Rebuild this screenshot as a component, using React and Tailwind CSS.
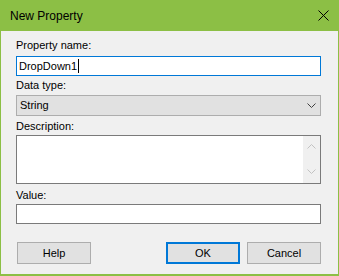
import React from 'react';

const font = { fontFamily: '"Liberation Sans", Arial, sans-serif' };

const Label = ({ children, className = '' }) => (
  <div className={`h-[13px] text-[11px] leading-[13px] text-black ${className}`}>{children}</div>
);

const Button = ({ children, primary }) => (
  <button
    className={`w-[74px] h-[22px] flex items-center justify-center text-[11px] text-black bg-[#e1e1e1] ${
      primary ? 'border-2 border-[#0078d7]' : 'border border-[#adadad]'
    }`}
  >
    {children}
  </button>
);

const Chevron = ({ up, color }) => (
  <svg width="9" height="5" viewBox="0 0 9 5" className="block">
    <path
      d={up ? 'M0.5 4.5 L4.5 0.5 L8.5 4.5' : 'M0.5 0.5 L4.5 4.5 L8.5 0.5'}
      fill="none"
      stroke={color}
      strokeWidth="1"
    />
  </svg>
);

export default function App() {
  return (
    <div className="w-[339px] h-[276px] flex flex-col bg-[#8cbf45]" style={font}>
      {/* Title bar */}
      <div className="h-[31px] flex items-center justify-between pl-[10px] pr-[10px]">
        <span className="text-[12px] text-black">New Property</span>
        <svg width="11" height="11" viewBox="0 0 11 11" className="block">
          <path d="M0.5 0.5 L10.5 10.5 M10.5 0.5 L0.5 10.5" stroke="#000" strokeWidth="1" />
        </svg>
      </div>

      {/* Body */}
      <div className="flex-1 mx-[1px] mb-[2px] bg-[#f0f0f0] pt-[8px] pl-[15px] pr-[17px]">
        <Label>Property name:</Label>
        <div className="mt-[4px] h-[20px] bg-white border border-[#0078d7] flex items-center pl-[2px] text-[11px] text-black">
          <span>DropDown1</span>
          <span className="ml-[1px] w-[1px] h-[14px] bg-black" />
        </div>

        <Label className="mt-[3px]">Data type:</Label>
        <div className="mt-[3px] h-[21px] bg-[#e1e1e1] border border-[#adadad] flex items-center justify-between pl-[3px] pr-[4px] text-[11px] text-black">
          <span>String</span>
          <Chevron color="#404040" />
        </div>

        <Label className="mt-[4px]">Description:</Label>
        <div className="mt-[2px] h-[49px] bg-white border border-[#7a7a7a] flex justify-end">
          <div className="w-[17px] bg-[#f0f0f0] flex flex-col items-center justify-between pt-[8px] pb-[9px]">
            <Chevron up color="#c2c2c2" />
            <Chevron color="#c2c2c2" />
          </div>
        </div>

        <Label className="mt-[5px]">Value:</Label>
        <div className="mt-[2px] h-[20px] bg-white border border-[#7a7a7a]" />

        <div className="mt-[18px] flex items-center">
          <div className="ml-[1px]">
            <Button>Help</Button>
          </div>
          <div className="ml-auto flex gap-[7px]">
            <Button primary>OK</Button>
            <Button>Cancel</Button>
          </div>
        </div>
      </div>
    </div>
  );
}
